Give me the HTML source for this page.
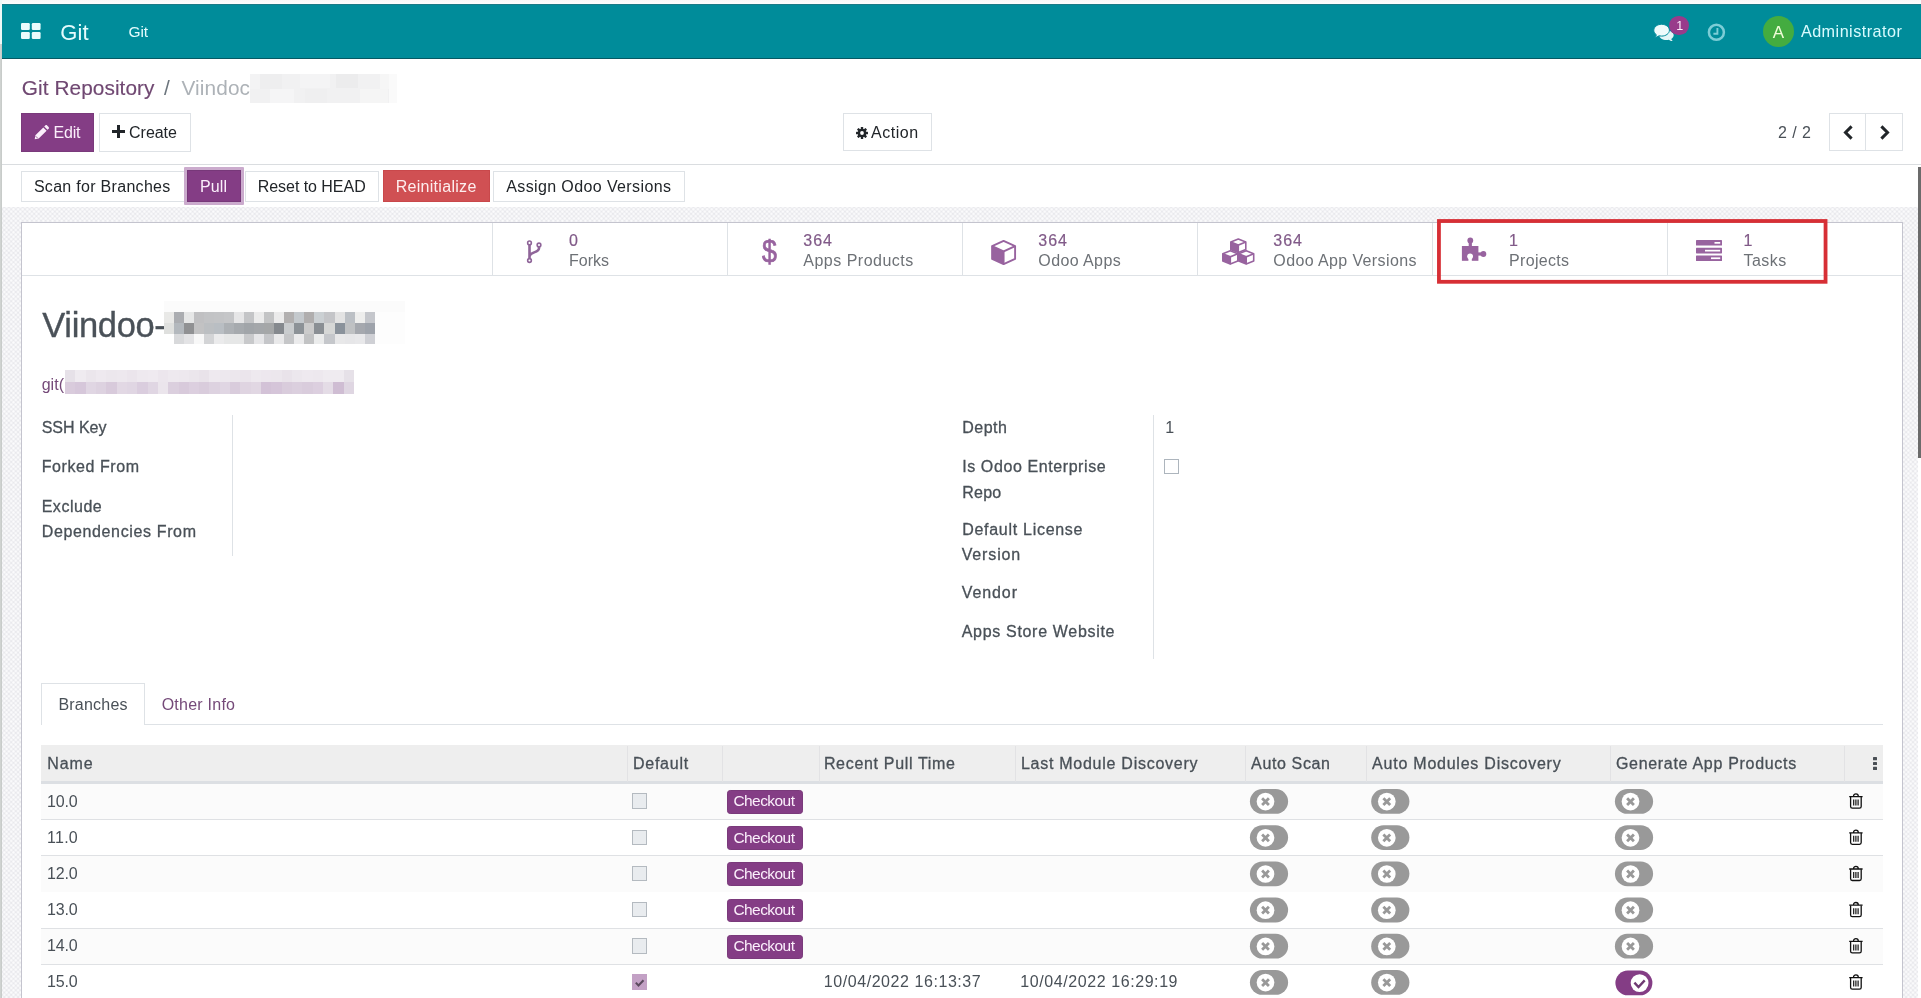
<!DOCTYPE html><html lang="en"><head><meta charset="utf-8"><title>Git Repository - Odoo</title><style>
*{box-sizing:border-box;margin:0;padding:0}
html,body{width:1921px;height:998px;overflow:hidden;background:#fff}
body{position:relative;font-family:"Liberation Sans",sans-serif;font-size:16px;color:#495057}
.t{position:absolute;white-space:nowrap;line-height:1}
.m{-webkit-text-stroke:0.3px currentColor}
.abs{position:absolute}
svg{position:absolute;overflow:visible}
</style></head><body><div id="app" style="position:absolute;left:0;top:0;width:1921px;height:998px;will-change:transform">
<nav aria-label="Main navigation">
<div style="position:absolute;left:2px;top:4px;width:1919px;height:55px;background:#008c9a;border-bottom:1px solid #065964;border-top:1px solid #1a7a87"></div>
<svg style="left:21px;top:23px" width="20" height="16" viewBox="0 0 20 16"><g fill="#e9fbfc"><rect x="0" y="0" width="8.8" height="7" rx="1.2"/><rect x="10.8" y="0" width="8.8" height="7" rx="1.2"/><rect x="0" y="9" width="8.8" height="7" rx="1.2"/><rect x="10.8" y="9" width="8.8" height="7" rx="1.2"/></g></svg>
<span class="t" style="left:60.30px;top:21.60px;font-size:22px;color:#e4fbfd;letter-spacing:0.142px;">Git</span>
<span class="t" style="left:128.50px;top:24.05px;font-size:15.5px;color:#e4fbfd;letter-spacing:-0.105px;">Git</span>
<svg style="left:1653px;top:24px" width="22" height="17" viewBox="0 0 22 17"><g fill="#e3f6f7"><path d="M13.5 6.5c4 0 7.2 2.1 7.2 4.8 0 1.5-1 2.8-2.5 3.7.3.8.9 1.5 1.5 2-1.400.1-2.800-.4-3.800-1.200-.8.2-1.600.3-2.400.3-4 0-7.200-2.100-7.200-4.800s3.200-4.800 7.200-4.800z" opacity="1"/></g><g fill="#eefbfb" stroke="#018c9c" stroke-width="1"><path d="M8.600.3c4.300 0 7.800 2.600 7.800 5.900s-3.500 5.900-7.800 5.900c-.9 0-1.800-.1-2.600-.3-1.200.9-2.700 1.500-4.300 1.400.8-.6 1.400-1.500 1.700-2.400-1.600-1.100-2.600-2.700-2.600-4.600 0-3.300 3.500-5.900 7.800-5.900z"/></g></svg>
<div style="position:absolute;left:1668.8px;top:15.8px;width:20.6px;height:18.8px;background:#983b8b;border-radius:9.4px"></div>
<span class="t" style="left:1676.30px;top:20.45px;font-size:12.5px;color:#fbe9fa;">1</span>
<svg style="left:1707px;top:22.500px" width="19" height="19" viewBox="0 0 19 19"><g fill="none" stroke="#7ccdd6" stroke-width="2.500"><circle cx="9.400" cy="9.300" r="7.500"/></g><path d="M10.400 5v5.700h-4" fill="none" stroke="#7ccdd6" stroke-width="1.900"/></svg>
<div style="position:absolute;left:1763px;top:15.6px;width:31.2px;height:31.2px;background:#44ac40;border-radius:50%"></div>
<span class="t" style="left:1772.70px;top:23.50px;font-size:17px;color:#f1fdd9;">A</span>
<span class="t" style="left:1800.90px;top:23.00px;font-size:16.2px;color:#d9fbfe;letter-spacing:0.464px;">Administrator</span>
</nav>
<header aria-label="Control panel">
<div style="position:absolute;left:2px;top:59px;width:1919px;height:106px;background:#fff;border-bottom:1px solid #dadde0"></div>
<span class="t" style="left:21.80px;top:77.60px;font-size:20.8px;color:#704872;letter-spacing:0.071px;-webkit-text-stroke:.15px currentColor;">Git Repository</span>
<span class="t" style="left:164.00px;top:77.60px;font-size:20.8px;color:#6c757d;">/</span>
<span class="t" style="left:181.50px;top:77.60px;font-size:20.8px;color:#adb2b7;letter-spacing:0.109px;">Viindoc</span>
<div style="position:absolute;left:250px;top:74px;width:139px;height:29px;background:#f1f1f2"></div>
<div style="position:absolute;left:250px;top:74px;width:10px;height:15px;background:#f3f3f4"></div>
<div style="position:absolute;left:260px;top:74px;width:22px;height:15px;background:#eeeeef"></div>
<div style="position:absolute;left:300px;top:74px;width:30px;height:14px;background:#f4f4f5"></div>
<div style="position:absolute;left:336px;top:74px;width:22px;height:14px;background:#ececed"></div>
<div style="position:absolute;left:270px;top:89px;width:24px;height:14px;background:#f5f5f6"></div>
<div style="position:absolute;left:305px;top:89px;width:22px;height:14px;background:#efeff0"></div>
<div style="position:absolute;left:360px;top:89px;width:28px;height:14px;background:#f5f5f5"></div>
<div style="position:absolute;left:380px;top:74px;width:9px;height:15px;background:#f6f6f6"></div>
<div style="position:absolute;left:389px;top:74px;width:8px;height:29px;background:#fafafa"></div>
<div style="position:absolute;left:21px;top:113px;width:73px;height:38.8px;background:#843d85;border:1px solid #7a3a7b"></div>
<svg style="left:33.500px;top:124.800px" width="15" height="15" viewBox="0 0 15 15"><g fill="#fbeffb"><path d="M9.300 2.400l3.300 3.300-7.900 7.900-4 .7.700-4zM10.200 1.500l1.100-1.100c.5-.5 1.300-.5 1.800 0l1.500 1.500c.5.500.5 1.300 0 1.800l-1.100 1.100z"/></g><path d="M1.700 11.200l2 2" stroke="#843d85" stroke-width=".8"/></svg>
<span class="t" style="left:53.50px;top:125.00px;font-size:16px;color:#fbeffb;letter-spacing:-0.191px;">Edit</span>
<div style="position:absolute;left:99px;top:113px;width:91.5px;height:38.8px;background:#fff;border:1px solid #dee2e6"></div>
<svg style="left:111.500px;top:125px" width="13" height="13" viewBox="0 0 13 13"><path d="M5 0h3v5h5v3h-5v5h-3v-5h-5v-3h5z" fill="#212529"/></svg>
<span class="t" style="left:129.10px;top:124.80px;font-size:16px;color:#212529;letter-spacing:-0.044px;">Create</span>
<div style="position:absolute;left:843px;top:113.2px;width:88.8px;height:38.3px;background:#fff;border:1px solid #dee2e6"></div>
<svg style="left:855.500px;top:127px" width="12" height="12" viewBox="0 0 12 12"><g fill="#212529"><circle cx="6" cy="6" r="4.300"/><g id="gt"><rect x="4.800" y="0" width="2.400" height="12" rx=".5"/></g><rect x="4.800" y="0" width="2.400" height="12" rx=".5" transform="rotate(45 6 6)"/><rect x="4.800" y="0" width="2.400" height="12" rx=".5" transform="rotate(90 6 6)"/><rect x="4.800" y="0" width="2.400" height="12" rx=".5" transform="rotate(135 6 6)"/></g><circle cx="6" cy="6" r="1.900" fill="#fff"/></svg>
<span class="t" style="left:871.10px;top:124.80px;font-size:16px;color:#212529;letter-spacing:0.507px;">Action</span>
<span class="t" style="left:1778.10px;top:124.90px;font-size:16px;color:#495057;letter-spacing:0.417px;">2 / 2</span>
<div style="position:absolute;left:1829px;top:113.2px;width:74px;height:38.3px;background:#fff;border:1px solid #dee2e6"></div>
<div style="position:absolute;left:1865px;top:113.2px;width:1px;height:38.3px;background:#dee2e6"></div>
<svg style="left:1843px;top:125px" width="11" height="15" viewBox="0 0 11 15"><path d="M8.600 1.400L2.500 7.500l6.100 6.100" fill="none" stroke="#212529" stroke-width="3"/></svg>
<svg style="left:1878.500px;top:125px" width="11" height="15" viewBox="0 0 11 15"><path d="M2.400 1.400l6.100 6.100-6.100 6.100" fill="none" stroke="#212529" stroke-width="3"/></svg>
</header>
<section aria-label="Status bar">
<div style="position:absolute;left:2px;top:165px;width:1919px;height:42px;background:#fff"></div>
<div style="position:absolute;left:21px;top:170.5px;width:163.5px;height:31px;background:#fff;border:1px solid #dee2e6"></div>
<span class="t" style="left:33.90px;top:178.60px;font-size:16px;color:#212529;letter-spacing:0.298px;">Scan for Branches</span>
<div style="position:absolute;left:183.8px;top:167.2px;width:60px;height:37.4px;background:#cbabcd;border-radius:1px"></div>
<div style="position:absolute;left:187px;top:170.4px;width:53.6px;height:31.2px;background:#843d85;border:1px solid #773879"></div>
<span class="t" style="left:200.00px;top:178.60px;font-size:16px;color:#fbeffb;letter-spacing:0.108px;">Pull</span>
<div style="position:absolute;left:245.2px;top:170.5px;width:134px;height:31px;background:#fff;border:1px solid #dee2e6"></div>
<span class="t" style="left:257.70px;top:178.60px;font-size:16px;color:#212529;letter-spacing:-0.040px;">Reset to HEAD</span>
<div style="position:absolute;left:382.8px;top:170.3px;width:107.2px;height:31.4px;background:#d05053;border:1px solid #c9484b"></div>
<span class="t" style="left:395.70px;top:178.70px;font-size:16px;color:#fdeeee;letter-spacing:0.294px;">Reinitialize</span>
<div style="position:absolute;left:493.3px;top:170.5px;width:191.5px;height:31px;background:#fff;border:1px solid #dee2e6"></div>
<span class="t" style="left:506.20px;top:178.70px;font-size:16px;color:#212529;letter-spacing:0.388px;">Assign Odoo Versions</span>
</section>
<main aria-label="Form sheet">
<div style="position:absolute;left:2px;top:207px;width:1916px;height:791px;background-color:#e9e9ed;background-image:radial-gradient(circle at 50% 50%,#fcfcfd 0,#fcfcfd .700px,rgba(252,252,253,0) 1.700px),radial-gradient(circle at 50% 50%,#fcfcfd 0,#fcfcfd .700px,rgba(252,252,253,0) 1.700px);background-size:4.600px 4.600px;background-position:0 0,2.300px 2.300px"></div>
<div style="position:absolute;left:21px;top:222px;width:1882px;height:790px;background:#fff;border:1px solid #c4c4ce"></div>
<div style="position:absolute;left:22px;top:275px;width:1880px;height:1px;background:#dee2e6"></div>
<div style="position:absolute;left:492px;top:223px;width:1px;height:52px;background:#dee2e6"></div>
<div style="position:absolute;left:727px;top:223px;width:1px;height:52px;background:#dee2e6"></div>
<div style="position:absolute;left:962px;top:223px;width:1px;height:52px;background:#dee2e6"></div>
<div style="position:absolute;left:1197px;top:223px;width:1px;height:52px;background:#dee2e6"></div>
<div style="position:absolute;left:1432px;top:223px;width:1px;height:52px;background:#dee2e6"></div>
<div style="position:absolute;left:1667px;top:223px;width:1px;height:52px;background:#dee2e6"></div>
<svg style="left:525px;top:239px" width="20" height="25" viewBox="0 0 20 25"><g fill="none" stroke="#8f6599"><path d="M4.500 6V19.500M14 8v1.200c0 4.800-9.500 3.600-9.500 8.300" stroke-width="2.600"/><g stroke-width="1.600" fill="#fff"><circle cx="4.500" cy="3.900" r="1.850"/><circle cx="14" cy="6" r="1.850"/><circle cx="4.500" cy="21.500" r="1.850"/></g></g></svg>
<span class="t" style="left:569.10px;top:232.80px;font-size:16px;color:#805a88;-webkit-text-stroke:.2px currentColor;">0</span>
<span class="t" style="left:569.10px;top:253.00px;font-size:16px;color:#6d7176;letter-spacing:-0.050px;">Forks</span>
<span class="t" style="left:761.80px;top:235.65px;font-size:30.5px;color:#98639f;-webkit-text-stroke:.7px currentColor;transform:scaleX(.88);transform-origin:0 0;">$</span>
<span class="t" style="left:803.30px;top:232.80px;font-size:16px;color:#805a88;letter-spacing:1.004px;-webkit-text-stroke:.2px currentColor;">364</span>
<span class="t" style="left:803.30px;top:253.00px;font-size:16px;color:#6d7176;letter-spacing:0.495px;">Apps Products</span>
<svg style="left:0;top:0" width="1921" height="300" viewBox="0 0 1921 300"><polygon points="992.10,246.12 1003.60,251.34 1003.60,264.10 992.10,258.88" fill="#98639f"/><polygon points="1003.60,240.90 1015.10,246.12 1015.10,258.88 1003.60,264.10 992.10,258.88 992.10,246.12" fill="none" stroke="#98639f" stroke-width="1.9" stroke-linejoin="round"/><polyline points="992.10,246.12 1003.60,251.34 1015.10,246.12" fill="none" stroke="#98639f" stroke-width="1.9"/><line x1="1003.6" y1="251.34" x2="1003.6" y2="264.1" stroke="#98639f" stroke-width="1.9"/><polygon points="1230.80,242.04 1238.30,245.07 1238.30,252.50 1230.80,249.46" fill="#98639f"/><polygon points="1238.30,239.00 1245.80,242.04 1245.80,249.46 1238.30,252.50 1230.80,249.46 1230.80,242.04" fill="none" stroke="#98639f" stroke-width="1.6" stroke-linejoin="round"/><polyline points="1230.80,242.04 1238.30,245.07 1245.80,242.04" fill="none" stroke="#98639f" stroke-width="1.6"/><line x1="1238.3" y1="245.075" x2="1238.3" y2="252.5" stroke="#98639f" stroke-width="1.6"/><polygon points="1222.80,253.79 1230.30,256.79 1230.30,264.10 1222.80,261.11" fill="#98639f"/><polygon points="1230.30,250.80 1237.80,253.79 1237.80,261.11 1230.30,264.10 1222.80,261.11 1222.80,253.79" fill="none" stroke="#98639f" stroke-width="1.6" stroke-linejoin="round"/><polyline points="1222.80,253.79 1230.30,256.79 1237.80,253.79" fill="none" stroke="#98639f" stroke-width="1.6"/><line x1="1230.3" y1="256.785" x2="1230.3" y2="264.1" stroke="#98639f" stroke-width="1.6"/><polygon points="1238.70,253.79 1246.20,256.79 1246.20,264.10 1238.70,261.11" fill="#98639f"/><polygon points="1246.20,250.80 1253.70,253.79 1253.70,261.11 1246.20,264.10 1238.70,261.11 1238.70,253.79" fill="none" stroke="#98639f" stroke-width="1.6" stroke-linejoin="round"/><polyline points="1238.70,253.79 1246.20,256.79 1253.70,253.79" fill="none" stroke="#98639f" stroke-width="1.6"/><line x1="1246.2" y1="256.785" x2="1246.2" y2="264.1" stroke="#98639f" stroke-width="1.6"/></svg>
<span class="t" style="left:1038.30px;top:232.80px;font-size:16px;color:#805a88;letter-spacing:1.004px;-webkit-text-stroke:.2px currentColor;">364</span>
<span class="t" style="left:1038.30px;top:253.00px;font-size:16px;color:#6d7176;letter-spacing:0.403px;">Odoo Apps</span>
<span class="t" style="left:1273.30px;top:232.80px;font-size:16px;color:#805a88;letter-spacing:1.004px;-webkit-text-stroke:.2px currentColor;">364</span>
<span class="t" style="left:1273.30px;top:253.00px;font-size:16px;color:#6d7176;letter-spacing:0.388px;">Odoo App Versions</span>
<svg style="left:1461px;top:237px" width="27" height="25" viewBox="0 0 27 25"><g fill="#98639f"><rect x=".900" y="9" width="16.500" height="14.800"/><circle cx="9.300" cy="3.400" r="2.900"/><rect x="7.700" y="4" width="3.200" height="6"/><circle cx="22.400" cy="17" r="2.900"/><rect x="17" y="15.400" width="4" height="3.200"/></g><g fill="#fff"><circle cx="9.100" cy="19.300" r="2.900"/><rect x="7.400" y="20" width="3.400" height="4"/></g></svg>
<span class="t" style="left:1509.10px;top:232.80px;font-size:16px;color:#805a88;-webkit-text-stroke:.2px currentColor;">1</span>
<span class="t" style="left:1509.10px;top:253.00px;font-size:16px;color:#6d7176;letter-spacing:0.300px;">Projects</span>
<svg style="left:1696px;top:240px" width="26" height="21" viewBox="0 0 26 21"><g fill="#98639f"><rect x="0" y="0" width="26" height="5.600" rx=".6"/><rect x="0" y="7.800" width="26" height="5.600" rx=".6"/><rect x="0" y="15.400" width="26" height="5.600" rx=".6"/></g><g fill="#fff"><rect x="18.500" y="2" width="5.700" height="1.700"/><rect x="9" y="9.800" width="15.200" height="1.700"/><rect x="15" y="17.400" width="9.200" height="1.700"/></g></svg>
<span class="t" style="left:1743.50px;top:232.80px;font-size:16px;color:#805a88;-webkit-text-stroke:.2px currentColor;">1</span>
<span class="t" style="left:1743.50px;top:253.00px;font-size:16px;color:#6d7176;letter-spacing:0.475px;">Tasks</span>
<span class="t" style="left:42.30px;top:308.45px;font-size:34.5px;color:#4a5158;letter-spacing:-0.351px;-webkit-text-stroke:.35px currentColor;">Viindoo-</span>
<svg style="left:164px;top:301px" width="242" height="44" viewBox="0 0 242 44" shape-rendering="crispEdges"><rect x="0" y="0" width="241" height="11" fill="#fbfbfb"/><rect x="211" y="11" width="30" height="32" fill="#fdfdfd"/><rect x="0.00" y="11" width="10.100" height="10.7" fill="#e9e9e7"/><rect x="10.03" y="11" width="10.100" height="10.7" fill="#abadb1"/><rect x="20.06" y="11" width="10.100" height="10.7" fill="#e6e7e7"/><rect x="30.09" y="11" width="10.100" height="10.7" fill="#c0c0c2"/><rect x="40.12" y="11" width="10.100" height="10.7" fill="#c2c3c5"/><rect x="50.15" y="11" width="10.100" height="10.7" fill="#c3c4c6"/><rect x="60.18" y="11" width="10.100" height="10.7" fill="#c5c6c8"/><rect x="70.21" y="11" width="10.100" height="10.7" fill="#e6e6e7"/><rect x="80.24" y="11" width="10.100" height="10.7" fill="#c4c5c7"/><rect x="90.27" y="11" width="10.100" height="10.7" fill="#ebebeb"/><rect x="100.30" y="11" width="10.100" height="10.7" fill="#c3c4c5"/><rect x="110.33" y="11" width="10.100" height="10.7" fill="#ebebeb"/><rect x="120.36" y="11" width="10.100" height="10.7" fill="#b2b0b0"/><rect x="130.39" y="11" width="10.100" height="10.7" fill="#c4c9cd"/><rect x="140.42" y="11" width="10.100" height="10.7" fill="#b0aeae"/><rect x="150.45" y="11" width="10.100" height="10.7" fill="#cbd0d3"/><rect x="160.48" y="11" width="10.100" height="10.7" fill="#c4c5c8"/><rect x="170.51" y="11" width="10.100" height="10.7" fill="#e3e3e3"/><rect x="180.54" y="11" width="10.100" height="10.7" fill="#bcc0c5"/><rect x="190.57" y="11" width="10.100" height="10.7" fill="#eeeeed"/><rect x="200.60" y="11" width="10.100" height="10.7" fill="#c5c7cc"/><rect x="0.00" y="21.7" width="10.100" height="10.8" fill="#dfe0de"/><rect x="10.03" y="21.7" width="10.100" height="10.8" fill="#b3b8bd"/><rect x="20.06" y="21.7" width="10.100" height="10.8" fill="#909193"/><rect x="30.09" y="21.7" width="10.100" height="10.8" fill="#c2c2c3"/><rect x="40.12" y="21.7" width="10.100" height="10.8" fill="#bcbfc2"/><rect x="50.15" y="21.7" width="10.100" height="10.8" fill="#b9bec3"/><rect x="60.18" y="21.7" width="10.100" height="10.8" fill="#adb1b5"/><rect x="70.21" y="21.7" width="10.100" height="10.8" fill="#a6aaae"/><rect x="80.24" y="21.7" width="10.100" height="10.8" fill="#a1a5a9"/><rect x="90.27" y="21.7" width="10.100" height="10.8" fill="#a4a7aa"/><rect x="100.30" y="21.7" width="10.100" height="10.8" fill="#a5a7a8"/><rect x="110.33" y="21.7" width="10.100" height="10.8" fill="#85898e"/><rect x="120.36" y="21.7" width="10.100" height="10.8" fill="#c9ccce"/><rect x="130.39" y="21.7" width="10.100" height="10.8" fill="#8c9297"/><rect x="140.42" y="21.7" width="10.100" height="10.8" fill="#cbcbcb"/><rect x="150.45" y="21.7" width="10.100" height="10.8" fill="#8a8f94"/><rect x="160.48" y="21.7" width="10.100" height="10.8" fill="#d6d7d6"/><rect x="170.51" y="21.7" width="10.100" height="10.8" fill="#8a929b"/><rect x="180.54" y="21.7" width="10.100" height="10.8" fill="#bfc1c3"/><rect x="190.57" y="21.7" width="10.100" height="10.8" fill="#a5a8ae"/><rect x="200.60" y="21.7" width="10.100" height="10.8" fill="#9ea3ab"/><rect x="0.00" y="32.5" width="10.100" height="10.5" fill="#ffffff"/><rect x="10.03" y="32.5" width="10.100" height="10.5" fill="#d8d9db"/><rect x="20.06" y="32.5" width="10.100" height="10.5" fill="#e3e3e5"/><rect x="30.09" y="32.5" width="10.100" height="10.5" fill="#f8f8f8"/><rect x="40.12" y="32.5" width="10.100" height="10.5" fill="#d3d4d6"/><rect x="50.15" y="32.5" width="10.100" height="10.5" fill="#ebebec"/><rect x="60.18" y="32.5" width="10.100" height="10.5" fill="#e6e7e7"/><rect x="70.21" y="32.5" width="10.100" height="10.5" fill="#e6e7e7"/><rect x="80.24" y="32.5" width="10.100" height="10.5" fill="#c8c9cb"/><rect x="90.27" y="32.5" width="10.100" height="10.5" fill="#e6e6e8"/><rect x="100.30" y="32.5" width="10.100" height="10.5" fill="#c5c6c9"/><rect x="110.33" y="32.5" width="10.100" height="10.5" fill="#e9e9ea"/><rect x="120.36" y="32.5" width="10.100" height="10.5" fill="#c5c6c8"/><rect x="130.39" y="32.5" width="10.100" height="10.5" fill="#ebebec"/><rect x="140.42" y="32.5" width="10.100" height="10.5" fill="#c2c3c4"/><rect x="150.45" y="32.5" width="10.100" height="10.5" fill="#ebecec"/><rect x="160.48" y="32.5" width="10.100" height="10.5" fill="#c5c7cb"/><rect x="170.51" y="32.5" width="10.100" height="10.5" fill="#e8e8e9"/><rect x="180.54" y="32.5" width="10.100" height="10.5" fill="#e6e6e8"/><rect x="190.57" y="32.5" width="10.100" height="10.5" fill="#e8e8ea"/><rect x="200.60" y="32.5" width="10.100" height="10.5" fill="#cfd0d5"/></svg>
<span class="t" style="left:41.70px;top:376.50px;font-size:16px;color:#754a79;letter-spacing:0.024px;">git(</span>
<svg style="left:65px;top:370px" width="290" height="24" viewBox="0 0 290 24" shape-rendering="crispEdges"><rect x="0.00" y="0" width="10.400" height="12.4" fill="#e6e1e8"/><rect x="10.32" y="0" width="10.400" height="12.4" fill="#efebf0"/><rect x="20.64" y="0" width="10.400" height="12.4" fill="#ebe6ec"/><rect x="30.96" y="0" width="10.400" height="12.4" fill="#eee9ef"/><rect x="41.28" y="0" width="10.400" height="12.4" fill="#ece7ed"/><rect x="51.60" y="0" width="10.400" height="12.4" fill="#ede8ee"/><rect x="61.92" y="0" width="10.400" height="12.4" fill="#ebe5ec"/><rect x="72.24" y="0" width="10.400" height="12.4" fill="#eee9ef"/><rect x="82.56" y="0" width="10.400" height="12.4" fill="#efeaf0"/><rect x="92.88" y="0" width="10.400" height="12.4" fill="#ece6ed"/><rect x="103.20" y="0" width="10.400" height="12.4" fill="#eee9ef"/><rect x="113.52" y="0" width="10.400" height="12.4" fill="#ede8ee"/><rect x="123.84" y="0" width="10.400" height="12.4" fill="#ebe6ec"/><rect x="134.16" y="0" width="10.400" height="12.4" fill="#e9e3ea"/><rect x="144.48" y="0" width="10.400" height="12.4" fill="#eee9ef"/><rect x="154.80" y="0" width="10.400" height="12.4" fill="#ede8ee"/><rect x="165.12" y="0" width="10.400" height="12.4" fill="#ece7ed"/><rect x="175.44" y="0" width="10.400" height="12.4" fill="#ebe5ec"/><rect x="185.76" y="0" width="10.400" height="12.4" fill="#eee9ef"/><rect x="196.08" y="0" width="10.400" height="12.4" fill="#ede7ee"/><rect x="206.40" y="0" width="10.400" height="12.4" fill="#ece7ed"/><rect x="216.72" y="0" width="10.400" height="12.4" fill="#e9e3ea"/><rect x="227.04" y="0" width="10.400" height="12.4" fill="#ece7ed"/><rect x="237.36" y="0" width="10.400" height="12.4" fill="#eee9ef"/><rect x="247.68" y="0" width="10.400" height="12.4" fill="#ede8ee"/><rect x="258.00" y="0" width="10.400" height="12.4" fill="#efebf0"/><rect x="268.32" y="0" width="10.400" height="12.4" fill="#efebf0"/><rect x="278.64" y="0" width="10.400" height="12.4" fill="#e6e1e8"/><rect x="0.00" y="12.4" width="10.400" height="11.4" fill="#d9cbdc"/><rect x="10.32" y="12.4" width="10.400" height="11.4" fill="#d6c7da"/><rect x="20.64" y="12.4" width="10.400" height="11.4" fill="#e0d6e3"/><rect x="30.96" y="12.4" width="10.400" height="11.4" fill="#ddd2e0"/><rect x="41.28" y="12.4" width="10.400" height="11.4" fill="#d8cadb"/><rect x="51.60" y="12.4" width="10.400" height="11.4" fill="#e2d8e4"/><rect x="61.92" y="12.4" width="10.400" height="11.4" fill="#e0d6e3"/><rect x="72.24" y="12.4" width="10.400" height="11.4" fill="#dacdde"/><rect x="82.56" y="12.4" width="10.400" height="11.4" fill="#e0d6e3"/><rect x="92.88" y="12.4" width="10.400" height="11.4" fill="#ebe5ec"/><rect x="103.20" y="12.4" width="10.400" height="11.4" fill="#dbcfde"/><rect x="113.52" y="12.4" width="10.400" height="11.4" fill="#d8cadb"/><rect x="123.84" y="12.4" width="10.400" height="11.4" fill="#dccfdf"/><rect x="134.16" y="12.4" width="10.400" height="11.4" fill="#d9ccdc"/><rect x="144.48" y="12.4" width="10.400" height="11.4" fill="#ddd2e0"/><rect x="154.80" y="12.4" width="10.400" height="11.4" fill="#e0d6e3"/><rect x="165.12" y="12.4" width="10.400" height="11.4" fill="#d9ccdc"/><rect x="175.44" y="12.4" width="10.400" height="11.4" fill="#dfd4e1"/><rect x="185.76" y="12.4" width="10.400" height="11.4" fill="#e1d7e3"/><rect x="196.08" y="12.4" width="10.400" height="11.4" fill="#d3c2d7"/><rect x="206.40" y="12.4" width="10.400" height="11.4" fill="#d5c5d9"/><rect x="216.72" y="12.4" width="10.400" height="11.4" fill="#d9ccdc"/><rect x="227.04" y="12.4" width="10.400" height="11.4" fill="#dbcfde"/><rect x="237.36" y="12.4" width="10.400" height="11.4" fill="#d9ccdc"/><rect x="247.68" y="12.4" width="10.400" height="11.4" fill="#dccfdf"/><rect x="258.00" y="12.4" width="10.400" height="11.4" fill="#e4dce6"/><rect x="268.32" y="12.4" width="10.400" height="11.4" fill="#cfbdd3"/><rect x="278.64" y="12.4" width="10.400" height="11.4" fill="#dfd6e2"/></svg>
<div style="position:absolute;left:232px;top:414.5px;width:1px;height:141.5px;background:#dee2e6"></div>
<div style="position:absolute;left:1153px;top:414.5px;width:1px;height:244.5px;background:#dee2e6"></div>
<span class="t m" style="left:41.70px;top:419.50px;font-size:16px;color:#495057;letter-spacing:-0.019px;">SSH Key</span>
<span class="t m" style="left:41.70px;top:459.00px;font-size:16px;color:#495057;letter-spacing:0.573px;">Forked From</span>
<span class="t m" style="left:41.70px;top:498.80px;font-size:16px;color:#495057;letter-spacing:0.513px;">Exclude</span>
<span class="t m" style="left:41.70px;top:523.80px;font-size:16px;color:#495057;letter-spacing:0.639px;">Dependencies From</span>
<span class="t m" style="left:962.20px;top:419.50px;font-size:16px;color:#495057;letter-spacing:0.527px;">Depth</span>
<span class="t" style="left:1165.30px;top:419.50px;font-size:16px;color:#495057;">1</span>
<span class="t m" style="left:962.20px;top:459.00px;font-size:16px;color:#495057;letter-spacing:0.594px;">Is Odoo Enterprise</span>
<span class="t m" style="left:962.20px;top:484.50px;font-size:16px;color:#495057;letter-spacing:0.251px;">Repo</span>
<span class="t m" style="left:962.20px;top:522.00px;font-size:16px;color:#495057;letter-spacing:0.715px;">Default License</span>
<span class="t m" style="left:961.70px;top:547.00px;font-size:16px;color:#495057;letter-spacing:0.856px;">Version</span>
<span class="t m" style="left:961.70px;top:585.00px;font-size:16px;color:#495057;letter-spacing:0.918px;">Vendor</span>
<span class="t m" style="left:961.70px;top:624.00px;font-size:16px;color:#495057;letter-spacing:0.688px;">Apps Store Website</span>
<div style="position:absolute;left:1164.3px;top:459px;width:14.7px;height:14.7px;background:#fff;border:1px solid #adb5bd"></div>
<div style="position:absolute;left:41px;top:723.5px;width:1842px;height:1px;background:#dee2e6"></div>
<div style="position:absolute;left:41.2px;top:683.2px;width:103.4px;height:41.4px;background:#fff;border:1px solid #dee2e6;border-bottom:none"></div>
<span class="t" style="left:58.40px;top:696.50px;font-size:16px;color:#495057;letter-spacing:0.215px;">Branches</span>
<span class="t" style="left:161.70px;top:696.50px;font-size:16px;color:#754a79;letter-spacing:0.239px;">Other Info</span>
<section aria-label="Branches">
<div style="position:absolute;left:41px;top:745px;width:1842px;height:36.5px;background:#eeeeee"></div>
<div style="position:absolute;left:41px;top:781.3px;width:1842px;height:2.4px;background:#dcdfe3"></div>
<div style="position:absolute;left:627px;top:746px;width:1px;height:35.5px;background:#e2e2e4"></div>
<div style="position:absolute;left:722.2px;top:746px;width:1px;height:35.5px;background:#e2e2e4"></div>
<div style="position:absolute;left:818.5px;top:746px;width:1px;height:35.5px;background:#e2e2e4"></div>
<div style="position:absolute;left:1015.2px;top:746px;width:1px;height:35.5px;background:#e2e2e4"></div>
<div style="position:absolute;left:1245.2px;top:746px;width:1px;height:35.5px;background:#e2e2e4"></div>
<div style="position:absolute;left:1366.2px;top:746px;width:1px;height:35.5px;background:#e2e2e4"></div>
<div style="position:absolute;left:1610.2px;top:746px;width:1px;height:35.5px;background:#e2e2e4"></div>
<div style="position:absolute;left:1844.3px;top:746px;width:1px;height:35.5px;background:#e2e2e4"></div>
<span class="t m" style="left:47.20px;top:755.80px;font-size:16px;color:#495057;letter-spacing:0.941px;">Name</span>
<span class="t m" style="left:632.90px;top:755.80px;font-size:16px;color:#495057;letter-spacing:0.767px;">Default</span>
<span class="t m" style="left:823.90px;top:755.80px;font-size:16px;color:#495057;letter-spacing:0.678px;">Recent Pull Time</span>
<span class="t m" style="left:1020.90px;top:755.80px;font-size:16px;color:#495057;letter-spacing:0.738px;">Last Module Discovery</span>
<span class="t m" style="left:1251.10px;top:755.80px;font-size:16px;color:#495057;letter-spacing:0.634px;">Auto Scan</span>
<span class="t m" style="left:1372.10px;top:755.80px;font-size:16px;color:#495057;letter-spacing:0.766px;">Auto Modules Discovery</span>
<span class="t m" style="left:1615.90px;top:755.80px;font-size:16px;color:#495057;letter-spacing:0.699px;">Generate App Products</span>
<svg style="left:1873px;top:757px" width="4" height="13" viewBox="0 0 4 13"><g fill="#4a4f55"><rect x="0" y="0" width="4" height="3.200" rx=".5"/><rect x="0" y="4.900" width="4" height="3.200" rx=".5"/><rect x="0" y="9.800" width="4" height="3.200" rx=".5"/></g></svg>
<div style="position:absolute;left:41px;top:783.7px;width:1842px;height:35.8px;background:#fbfbfb"></div>
<div style="position:absolute;left:41px;top:819.2px;width:1842px;height:1.1px;background:#dfe1e4"></div>
<span class="t" style="left:47.10px;top:794.00px;font-size:16px;color:#495057;letter-spacing:-0.179px;">10.0</span>
<div style="position:absolute;left:632px;top:793.3px;width:15px;height:15.5px;background:#e9ecef;border:1px solid #b4bac0"></div>
<div style="position:absolute;left:727px;top:790.0px;width:76px;height:23.8px;background:#843d85;border-radius:3.200px;border:1px solid #7a3a7b"></div>
<span class="t" style="left:733.40px;top:793.45px;font-size:15.5px;color:#fbeffb;letter-spacing:-0.555px;">Checkout</span>
<div style="position:absolute;left:41px;top:819.95px;width:1842px;height:35.8px;background:#ffffff"></div>
<div style="position:absolute;left:41px;top:855.45px;width:1842px;height:1.1px;background:#dfe1e4"></div>
<span class="t" style="left:47.10px;top:830.00px;font-size:16px;color:#495057;letter-spacing:0.216px;">11.0</span>
<div style="position:absolute;left:632px;top:829.5px;width:15px;height:15.5px;background:#e9ecef;border:1px solid #b4bac0"></div>
<div style="position:absolute;left:727px;top:826.2px;width:76px;height:23.8px;background:#843d85;border-radius:3.200px;border:1px solid #7a3a7b"></div>
<span class="t" style="left:733.40px;top:829.65px;font-size:15.5px;color:#fbeffb;letter-spacing:-0.555px;">Checkout</span>
<div style="position:absolute;left:41px;top:856.2px;width:1842px;height:35.8px;background:#fbfbfb"></div>
<div style="position:absolute;left:41px;top:891.7px;width:1842px;height:1.1px;background:#dfe1e4"></div>
<span class="t" style="left:47.10px;top:866.00px;font-size:16px;color:#495057;letter-spacing:-0.179px;">12.0</span>
<div style="position:absolute;left:632px;top:865.6999999999999px;width:15px;height:15.5px;background:#e9ecef;border:1px solid #b4bac0"></div>
<div style="position:absolute;left:727px;top:862.4px;width:76px;height:23.8px;background:#843d85;border-radius:3.200px;border:1px solid #7a3a7b"></div>
<span class="t" style="left:733.40px;top:865.85px;font-size:15.5px;color:#fbeffb;letter-spacing:-0.555px;">Checkout</span>
<div style="position:absolute;left:41px;top:892.45px;width:1842px;height:35.8px;background:#ffffff"></div>
<div style="position:absolute;left:41px;top:927.95px;width:1842px;height:1.1px;background:#dfe1e4"></div>
<span class="t" style="left:47.10px;top:902.00px;font-size:16px;color:#495057;letter-spacing:-0.179px;">13.0</span>
<div style="position:absolute;left:632px;top:901.9px;width:15px;height:15.5px;background:#e9ecef;border:1px solid #b4bac0"></div>
<div style="position:absolute;left:727px;top:898.6px;width:76px;height:23.8px;background:#843d85;border-radius:3.200px;border:1px solid #7a3a7b"></div>
<span class="t" style="left:733.40px;top:902.05px;font-size:15.5px;color:#fbeffb;letter-spacing:-0.555px;">Checkout</span>
<div style="position:absolute;left:41px;top:928.7px;width:1842px;height:35.8px;background:#fbfbfb"></div>
<div style="position:absolute;left:41px;top:964.2px;width:1842px;height:1.1px;background:#dfe1e4"></div>
<span class="t" style="left:47.10px;top:938.00px;font-size:16px;color:#495057;letter-spacing:-0.179px;">14.0</span>
<div style="position:absolute;left:632px;top:938.0999999999999px;width:15px;height:15.5px;background:#e9ecef;border:1px solid #b4bac0"></div>
<div style="position:absolute;left:727px;top:934.8px;width:76px;height:23.8px;background:#843d85;border-radius:3.200px;border:1px solid #7a3a7b"></div>
<span class="t" style="left:733.40px;top:938.25px;font-size:15.5px;color:#fbeffb;letter-spacing:-0.555px;">Checkout</span>
<div style="position:absolute;left:41px;top:964.95px;width:1842px;height:35.8px;background:#ffffff"></div>
<div style="position:absolute;left:41px;top:1000.45px;width:1842px;height:1.1px;background:#dfe1e4"></div>
<span class="t" style="left:47.10px;top:974.00px;font-size:16px;color:#495057;letter-spacing:-0.179px;">15.0</span>
<div style="position:absolute;left:632px;top:974.3px;width:15px;height:15.5px;background:#c3a1c5"></div>
<span class="t" style="left:823.80px;top:973.80px;font-size:16px;color:#495057;letter-spacing:0.561px;">10/04/2022 16:13:37</span>
<span class="t" style="left:1020.30px;top:973.80px;font-size:16px;color:#495057;letter-spacing:0.578px;">10/04/2022 16:29:19</span>
<svg style="left:0;top:0" width="1921" height="998" viewBox="0 0 1921 998"><g transform="translate(1249.9 789.0)"><rect x="0" y="0" width="38.200" height="24.800" rx="12.400" fill="#999"/><circle cx="15.600" cy="12.600" r="8.850" fill="#fff"/><path d="M12.200 9.200l6.800 6.800M19 9.200l-6.800 6.800" stroke="#999" stroke-width="2.800" fill="none"/></g><g transform="translate(1371.2 789.0)"><rect x="0" y="0" width="38.200" height="24.800" rx="12.400" fill="#999"/><circle cx="15.600" cy="12.600" r="8.850" fill="#fff"/><path d="M12.200 9.200l6.800 6.800M19 9.200l-6.800 6.800" stroke="#999" stroke-width="2.800" fill="none"/></g><g transform="translate(1614.9 789.0)"><rect x="0" y="0" width="38.200" height="24.800" rx="12.400" fill="#999"/><circle cx="15.600" cy="12.600" r="8.850" fill="#fff"/><path d="M12.200 9.200l6.800 6.800M19 9.200l-6.800 6.800" stroke="#999" stroke-width="2.800" fill="none"/></g><g transform="translate(1849.2 793.6)" fill="none" stroke="#111" stroke-width="1.300"><path d="M0 3h13.400M4.300 2.700c0-3.200 4.800-3.200 4.800 0"/><path d="M1.400 3.200v9.600c0 1.100.6 1.700 1.700 1.700h7.200c1.100 0 1.700-.6 1.700-1.700v-9.600"/><path d="M4.500 6v6M6.700 6v6M8.900 6v6" stroke-width="1.200"/></g><g transform="translate(1249.9 825.2)"><rect x="0" y="0" width="38.200" height="24.800" rx="12.400" fill="#999"/><circle cx="15.600" cy="12.600" r="8.850" fill="#fff"/><path d="M12.200 9.200l6.800 6.800M19 9.200l-6.800 6.800" stroke="#999" stroke-width="2.800" fill="none"/></g><g transform="translate(1371.2 825.2)"><rect x="0" y="0" width="38.200" height="24.800" rx="12.400" fill="#999"/><circle cx="15.600" cy="12.600" r="8.850" fill="#fff"/><path d="M12.200 9.200l6.800 6.800M19 9.200l-6.800 6.800" stroke="#999" stroke-width="2.800" fill="none"/></g><g transform="translate(1614.9 825.2)"><rect x="0" y="0" width="38.200" height="24.800" rx="12.400" fill="#999"/><circle cx="15.600" cy="12.600" r="8.850" fill="#fff"/><path d="M12.200 9.200l6.800 6.800M19 9.200l-6.800 6.800" stroke="#999" stroke-width="2.800" fill="none"/></g><g transform="translate(1849.2 829.8000000000001)" fill="none" stroke="#111" stroke-width="1.300"><path d="M0 3h13.400M4.300 2.700c0-3.200 4.800-3.200 4.800 0"/><path d="M1.400 3.200v9.600c0 1.100.6 1.700 1.700 1.700h7.200c1.100 0 1.700-.6 1.700-1.700v-9.600"/><path d="M4.500 6v6M6.700 6v6M8.900 6v6" stroke-width="1.200"/></g><g transform="translate(1249.9 861.4)"><rect x="0" y="0" width="38.200" height="24.800" rx="12.400" fill="#999"/><circle cx="15.600" cy="12.600" r="8.850" fill="#fff"/><path d="M12.200 9.200l6.800 6.800M19 9.200l-6.800 6.800" stroke="#999" stroke-width="2.800" fill="none"/></g><g transform="translate(1371.2 861.4)"><rect x="0" y="0" width="38.200" height="24.800" rx="12.400" fill="#999"/><circle cx="15.600" cy="12.600" r="8.850" fill="#fff"/><path d="M12.200 9.200l6.800 6.800M19 9.200l-6.800 6.800" stroke="#999" stroke-width="2.800" fill="none"/></g><g transform="translate(1614.9 861.4)"><rect x="0" y="0" width="38.200" height="24.800" rx="12.400" fill="#999"/><circle cx="15.600" cy="12.600" r="8.850" fill="#fff"/><path d="M12.200 9.200l6.800 6.800M19 9.200l-6.800 6.800" stroke="#999" stroke-width="2.800" fill="none"/></g><g transform="translate(1849.2 866.0)" fill="none" stroke="#111" stroke-width="1.300"><path d="M0 3h13.400M4.300 2.700c0-3.200 4.800-3.200 4.800 0"/><path d="M1.400 3.200v9.600c0 1.100.6 1.700 1.700 1.700h7.200c1.100 0 1.700-.6 1.700-1.700v-9.600"/><path d="M4.500 6v6M6.700 6v6M8.900 6v6" stroke-width="1.200"/></g><g transform="translate(1249.9 897.6)"><rect x="0" y="0" width="38.200" height="24.800" rx="12.400" fill="#999"/><circle cx="15.600" cy="12.600" r="8.850" fill="#fff"/><path d="M12.200 9.200l6.800 6.800M19 9.200l-6.800 6.800" stroke="#999" stroke-width="2.800" fill="none"/></g><g transform="translate(1371.2 897.6)"><rect x="0" y="0" width="38.200" height="24.800" rx="12.400" fill="#999"/><circle cx="15.600" cy="12.600" r="8.850" fill="#fff"/><path d="M12.200 9.200l6.800 6.800M19 9.200l-6.800 6.800" stroke="#999" stroke-width="2.800" fill="none"/></g><g transform="translate(1614.9 897.6)"><rect x="0" y="0" width="38.200" height="24.800" rx="12.400" fill="#999"/><circle cx="15.600" cy="12.600" r="8.850" fill="#fff"/><path d="M12.200 9.200l6.800 6.800M19 9.200l-6.800 6.800" stroke="#999" stroke-width="2.800" fill="none"/></g><g transform="translate(1849.2 902.2)" fill="none" stroke="#111" stroke-width="1.300"><path d="M0 3h13.400M4.300 2.700c0-3.200 4.800-3.200 4.800 0"/><path d="M1.400 3.200v9.600c0 1.100.6 1.700 1.700 1.700h7.200c1.100 0 1.700-.6 1.700-1.700v-9.600"/><path d="M4.500 6v6M6.700 6v6M8.900 6v6" stroke-width="1.200"/></g><g transform="translate(1249.9 933.8)"><rect x="0" y="0" width="38.200" height="24.800" rx="12.400" fill="#999"/><circle cx="15.600" cy="12.600" r="8.850" fill="#fff"/><path d="M12.200 9.200l6.800 6.800M19 9.200l-6.800 6.800" stroke="#999" stroke-width="2.800" fill="none"/></g><g transform="translate(1371.2 933.8)"><rect x="0" y="0" width="38.200" height="24.800" rx="12.400" fill="#999"/><circle cx="15.600" cy="12.600" r="8.850" fill="#fff"/><path d="M12.200 9.200l6.800 6.800M19 9.200l-6.800 6.800" stroke="#999" stroke-width="2.800" fill="none"/></g><g transform="translate(1614.9 933.8)"><rect x="0" y="0" width="38.200" height="24.800" rx="12.400" fill="#999"/><circle cx="15.600" cy="12.600" r="8.850" fill="#fff"/><path d="M12.200 9.200l6.800 6.800M19 9.200l-6.800 6.800" stroke="#999" stroke-width="2.800" fill="none"/></g><g transform="translate(1849.2 938.4000000000001)" fill="none" stroke="#111" stroke-width="1.300"><path d="M0 3h13.400M4.300 2.700c0-3.200 4.800-3.200 4.800 0"/><path d="M1.400 3.200v9.600c0 1.100.6 1.700 1.700 1.700h7.200c1.100 0 1.700-.6 1.700-1.700v-9.600"/><path d="M4.500 6v6M6.700 6v6M8.900 6v6" stroke-width="1.200"/></g><path d="M635.800 982.6l2.700 2.900 5-5.300" stroke="#5b4a5e" stroke-width="2" fill="none"/><g transform="translate(1249.9 970.0)"><rect x="0" y="0" width="38.200" height="24.800" rx="12.400" fill="#999"/><circle cx="15.600" cy="12.600" r="8.850" fill="#fff"/><path d="M12.200 9.200l6.800 6.800M19 9.200l-6.800 6.800" stroke="#999" stroke-width="2.800" fill="none"/></g><g transform="translate(1371.2 970.0)"><rect x="0" y="0" width="38.200" height="24.800" rx="12.400" fill="#999"/><circle cx="15.600" cy="12.600" r="8.850" fill="#fff"/><path d="M12.200 9.200l6.800 6.800M19 9.200l-6.800 6.800" stroke="#999" stroke-width="2.800" fill="none"/></g><g transform="translate(1615.4 970.5)"><rect x="0" y="0" width="37" height="24.800" rx="12.400" fill="#843d85"/><circle cx="24.200" cy="12.600" r="8.900" fill="#fff"/><path d="M19 12.200l4.100 4.300 6.200-6.600" stroke="#6f3a72" stroke-width="2.400" fill="none"/></g><g transform="translate(1849.2 974.6)" fill="none" stroke="#111" stroke-width="1.300"><path d="M0 3h13.400M4.300 2.700c0-3.200 4.800-3.200 4.800 0"/><path d="M1.400 3.200v9.600c0 1.100.6 1.700 1.700 1.700h7.200c1.100 0 1.700-.6 1.700-1.700v-9.600"/><path d="M4.500 6v6M6.700 6v6M8.900 6v6" stroke-width="1.200"/></g></svg>
</section>
</main>
<svg style="left:1437px;top:219px" width="391" height="65" viewBox="0 0 391 65"><rect x="1.95" y="2" width="386.6" height="60.8" fill="none" stroke="#d72f35" stroke-width="3.8"/></svg>
<div style="position:absolute;left:1918.2px;top:167px;width:3px;height:290.5px;background:#6b6b6b"></div>
<div style="position:absolute;left:0px;top:0px;width:1921px;height:4px;background:linear-gradient(#f7f8f8,#fbfefe)"></div>
<div style="position:absolute;left:0px;top:0px;width:2px;height:998px;background:linear-gradient(90deg,#d3d6d4,#c4c8c6)"></div>
<div style="position:absolute;left:0px;top:0px;width:2px;height:44px;background:#edf9f7"></div>
</div></body></html>
